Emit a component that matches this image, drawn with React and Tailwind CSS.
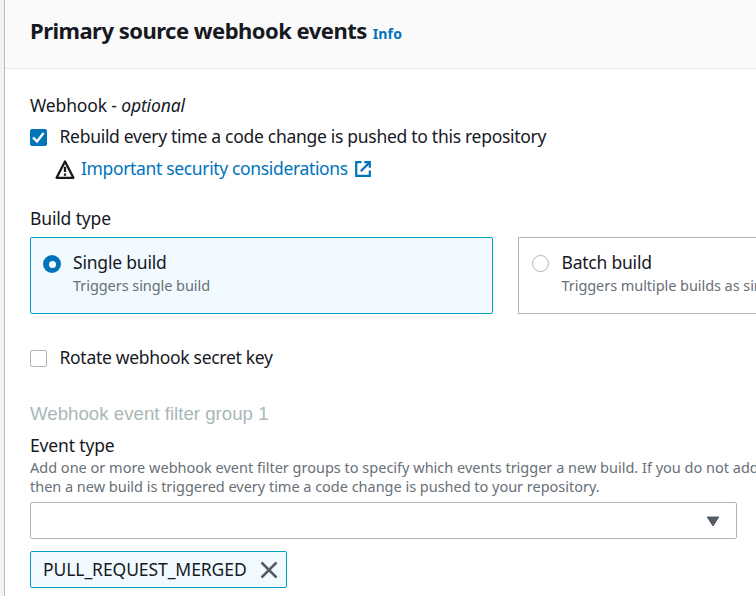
import React from 'react';

function WarningIcon() {
  return (
    <svg className="h-[21px] w-[20px] shrink-0" viewBox="0 0 20 21" fill="none" stroke="#16191f" strokeWidth="2.3">
      <path d="M10 2.4 L18.4 18.8 H1.6 Z" strokeLinejoin="round" />
      <path d="M10 7.8 V13 M10 14.4 V16.8" />
    </svg>
  );
}

function ExternalIcon() {
  return (
    <svg className="h-4 w-4 shrink-0" viewBox="0 0 16 16" fill="none" stroke="#0073bb" strokeWidth="2.2">
      <path d="M6.5 1.2 H1.2 V14.8 H14.8 V9.5" />
      <path d="M9.2 1.2 H14.8 V6.8 M14.6 1.4 L5.8 10.2" />
    </svg>
  );
}

function Label({ className = '', children }) {
  return <div className={'h-6 text-[17.5px] leading-[22px] text-[#16191f] ' + className}>{children}</div>;
}

export default function App() {
  return (
    <div className="flex h-[596px] w-[756px] overflow-hidden whitespace-nowrap bg-[#f2f3f3] font-['Noto_Sans','Open_Sans',sans-serif]">
      <main className="ml-1 flex w-[1010px] shrink-0 flex-col border-l border-[#b6bec4] bg-white">
        <header className="flex h-[69px] shrink-0 items-baseline gap-[6px] border-b border-[#e3e8e8] bg-[#fafafa] pl-[25px] pt-[15px] leading-[30px]">
          <h1 className="text-[22px] font-bold tracking-[-0.52px] text-[#16191f]">Primary source webhook events</h1>
          <a className="text-[14px] font-bold tracking-[0.15px] text-[#0073bb]">Info</a>
        </header>
        <div className="flex flex-col pl-[25px] pt-[25px]">
          <Label className="tracking-[-0.14px]">Webhook - <em>optional</em></Label>
          <label className="mt-[7px] flex items-center">
            <span className="mr-[12.5px] flex h-[17px] w-[17px] items-center justify-center rounded-[2px] bg-[#0073bb]">
              <svg className="h-[17px] w-[17px]" viewBox="0 0 17 17" fill="none" stroke="#fff" strokeWidth="2.4">
                <path d="M3 8.5 L7 12.4 L13.6 4" />
              </svg>
            </span>
            <Label className="tracking-[-0.29px]">Rebuild every time a code change is pushed to this repository</Label>
          </label>
          <div className="mt-2 flex items-center pl-[25px]">
            <WarningIcon />
            <a className="ml-[6px] mr-[7px] h-6 text-[17.5px] leading-[22px] tracking-[-0.35px] text-[#0073bb]">Important security considerations</a>
            <ExternalIcon />
          </div>
          <Label className="mt-[26px] tracking-[-0.15px]">Build type</Label>
          <div className="mt-[6px] flex gap-[25px]">
            <div className="flex h-[77px] w-[463px] shrink-0 rounded-[2px] border border-[#00a1c9] bg-[#f1faff] pl-[12px] pt-[13px]">
              <span className="mr-[12px] mt-[4px] h-[18px] w-[18px] rounded-full bg-[#0073bb] p-[5.5px]">
                <span className="block h-[7px] w-[7px] rounded-full bg-white" />
              </span>
              <div>
                <Label className="tracking-[-0.2px]">Single build</Label>
                <div className="h-[22px] text-[14.5px] leading-[21px] tracking-[-0.06px] text-[#687078]">Triggers single build</div>
              </div>
            </div>
            <div className="flex h-[77px] w-[463px] shrink-0 border border-[#aab7b8] bg-white pl-[13px] pt-[13px]">
              <span className="mr-[12.5px] mt-[4px] h-[17px] w-[17px] rounded-full border border-[#aab7b8] bg-white" />
              <div>
                <Label className="tracking-[-0.22px]">Batch build</Label>
                <div className="h-[22px] text-[14.5px] leading-[21px] tracking-[-0.06px] text-[#687078]">Triggers multiple builds as single execution</div>
              </div>
            </div>
          </div>
          <label className="mt-8 flex items-center">
            <span className="mr-[12.5px] h-[17px] w-[17px] rounded-[2px] border border-[#aab7b8] bg-white" />
            <Label className="tracking-[-0.3px]">Rotate webhook secret key</Label>
          </label>
          <h2 className="mt-8 h-6 font-['Liberation_Sans',sans-serif] text-[18.7px] leading-6 text-[#aab7b8]">Webhook event filter group 1</h2>
          <Label className="mt-2 tracking-[-0.15px]">Event type</Label>
          <p className="text-[14.5px] leading-[19px] text-[#687078]">
            <span>Add one or more webhook event filter groups to specify which events trigger a new build. If you do not add</span>
            <br />
            <span className="tracking-[-0.02px]">then a new build is triggered every time a code change is pushed to your repository.</span>
          </p>
          <div className="mt-[6px] flex h-[37px] w-[707px] items-center justify-end rounded-[2px] border border-[#aab7b8] bg-white pr-[16px] pt-px">
            <svg className="h-[11px] w-[14px]" viewBox="0 0 14 11">
              <path d="M1.2 1 H12.8 L7 10 Z" fill="#545b64" stroke="#545b64" strokeWidth="1" strokeLinejoin="round" />
            </svg>
          </div>
          <div className="mt-3 flex h-[37px] w-[257px] items-center justify-between rounded-[2px] border border-[#00a1c9] bg-[#f1faff] pl-[12px] pr-[8px]">
            <Label className="tracking-[-0.08px]">PULL_REQUEST_MERGED</Label>
            <svg className="h-[18px] w-[18px]" viewBox="0 0 18 18" fill="none" stroke="#545b64" strokeWidth="2.5">
              <path d="M1.5 1.5 L16.5 16.5 M16.5 1.5 L1.5 16.5" />
            </svg>
          </div>
        </div>
      </main>
    </div>
  );
}
